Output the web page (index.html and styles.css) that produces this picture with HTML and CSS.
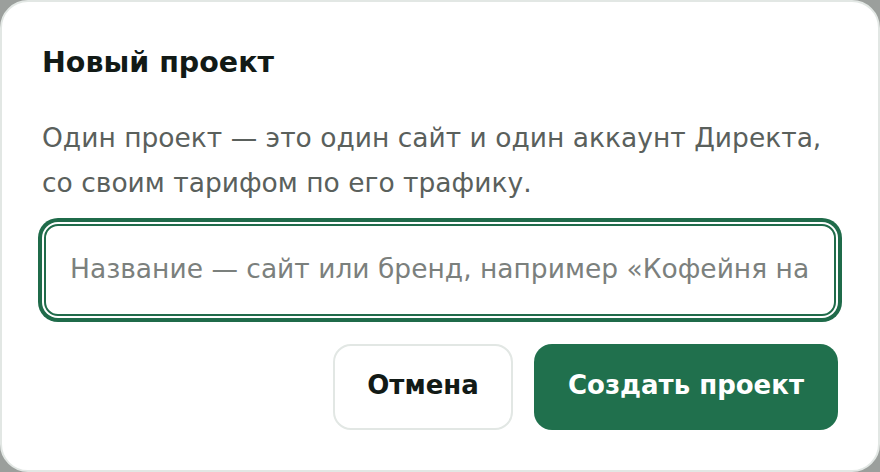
FILE: index.html
```html
<!DOCTYPE html>
<html lang="ru">
<head>
<meta charset="utf-8">
<link rel="stylesheet" href="styles.css">
</head>
<body>
<div class="dialog">
  <h1 class="title">Новый проект</h1>
  <p class="desc">Один проект — это один сайт и один аккаунт Директа, со своим тарифом по его трафику.</p>
  <div class="field">
    <input class="input" type="text" placeholder="Название — сайт или бренд, например «Кофейня на Пушкинской»">
  </div>
  <div class="actions">
    <button class="btn btn-ghost">Отмена</button>
    <button class="btn btn-primary">Создать проект</button>
  </div>
</div>
</body>
</html>
```

FILE: styles.css
```css
html, body {
  margin: 0;
  padding: 0;
}
body {
  background: #9b9f9c;
  font-family: "DejaVu Sans", "Noto Sans", sans-serif;
}
.dialog {
  box-sizing: border-box;
  width: 880px;
  height: 472px;
  background: #fff;
  border: 2px solid #e2e7e4;
  border-radius: 28px;
  padding: 44px 40px 0 40px;
  display: flex;
  flex-direction: column;
}
.title {
  margin: 0;
  font-size: 28.5px;
  line-height: 34px;
  font-weight: 700;
  color: #121a16;
}
.desc {
  margin: 35px 0 0 0;
  font-size: 26.5px;
  line-height: 45px;
  color: #5a605c;
  font-weight: 400;
}
.field {
  margin: 19px 2px 0 2px;
}
.input {
  box-sizing: border-box;
  display: block;
  width: 100%;
  height: 92px;
  border: 2px solid #1f6b4a;
  border-radius: 14px;
  box-shadow: 0 0 0 2px #fff, 0 0 0 6px #1f6b4a;
  outline: none;
  padding: 0 24px 4px 24px;
  font-family: inherit;
  font-size: 26.5px;
  color: #121a16;
  background: #fff;
}
.input::placeholder {
  color: #7b807d;
}
.actions {
  margin-top: 28px;
  display: flex;
  justify-content: flex-end;
  gap: 21px;
}
.btn {
  box-sizing: border-box;
  height: 86px;
  border-radius: 18px;
  font-family: inherit;
  font-size: 26px;
  font-weight: 700;
  padding: 0 0 4px 0;
  cursor: pointer;
}
.btn-ghost {
  width: 180px;
  background: #fff;
  border: 2px solid #e2e7e4;
  color: #121a16;
}
.btn-primary {
  width: 304px;
  background: #20704d;
  border: none;
  color: #fff;
}
```
